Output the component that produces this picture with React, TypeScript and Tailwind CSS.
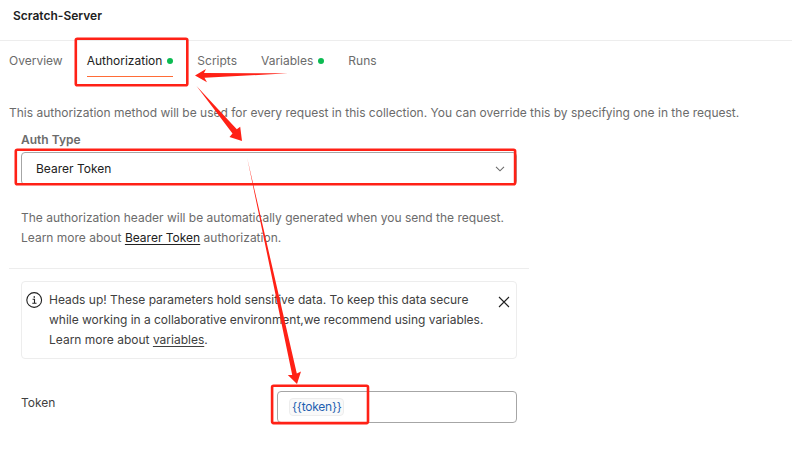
import React from "react";

function Dot() {
  return <span className="size-1.5 rounded-full bg-[#0cbb52]" />;
}

const tab = "flex h-[36px] items-center gap-[5px] border-b border-transparent pt-1";

function Annotations() {
  return (
    <svg className="pointer-events-none absolute left-0 top-0" width="792" height="467" viewBox="0 0 792 467">
      <g fill="none" stroke="#ff2116" strokeWidth="2.6">
        <rect x="75.8" y="38.8" width="111.5" height="46.4" rx="1.5" />
        <rect x="15.8" y="149.8" width="499.3" height="34.4" rx="1.5" />
        <rect x="272.1" y="385.8" width="95.9" height="37.3" rx="1.5" />
      </g>
      <g fill="#ff2116">
        <path d="M288 73.3 L204 73 L206 69 L195 75.6 L207 82.2 L204.5 77.8 Z" />
        <path d="M196.5 86 L236.8 129.3 L240.2 126.8 L242 141 L229.5 137 L232.5 133.5 Z" />
        <path d="M247.2 158 L296.8 373.5 L301 371.5 L297 384 L287.8 375 L292.2 375 Z" />
      </g>
    </svg>
  );
}

export default function App() {
  return (
    <div className="relative h-[467px] w-[792px] overflow-hidden bg-white font-['Inter',sans-serif] text-[12px] leading-5 text-[#6b6b6b]">
      <header className="h-[41px] border-b border-[#ededed] pl-[13px] pt-[6px] font-semibold text-[#212121]">
        Scratch-Server
      </header>
      <nav className="flex pl-[9px]">
        <div className={tab}>Overview</div>
        <div className="ml-6 flex h-[36px] items-center gap-[5px] border-b border-[#ff6c37] pt-1 text-[#212121]">
          Authorization <Dot />
        </div>
        <div className={tab + " ml-6"}>Scripts</div>
        <div className={tab + " ml-6"}>Variables <Dot /></div>
        <div className={tab + " ml-6"}>Runs</div>
      </nav>
      <main>
        <p className="mt-[26px] whitespace-nowrap pl-[9px]">
          This authorization method will be used for every request in this collection. You can override this by specifying one in the request.
        </p>
        <section className="ml-[9px] h-[146px] w-[520px] border-b border-[#ededed] pl-3 pt-[7px]">
          <div className="font-semibold">Auth Type</div>
          <div className="mt-[2px] flex h-[33px] w-[496px] items-center justify-between rounded border border-[#a6a6a6] pl-[14px] pr-[11px] text-[#212121]">
            <span>Bearer Token</span>
            <svg width="10" height="6" viewBox="0 0 10 6" fill="none" stroke="#6b6b6b" strokeWidth="1.1"><path d="M1 .8 5 4.8 9 .8" /></svg>
          </div>
          <p className="mt-[23px] whitespace-nowrap">
            The authorization header will be automatically generated when you send the request.
            <br />
            Learn more about <a className="text-[#212121] underline underline-offset-2">Bearer Token</a> authorization.
          </p>
        </section>
        <section className="ml-[21px] mt-3 flex h-[78px] w-[496px] rounded border border-[#ededed] pl-1 pt-[8px] text-[#404040]">
          <svg className="mt-[2px] shrink-0" width="17" height="17" viewBox="0 0 17 17" fill="none" stroke="#212121" strokeWidth="1.1">
            <circle cx="8.2" cy="8" r="7.4" />
            <path d="M6.6 7.2h1.9v4M6.3 11.3h4.2" />
            <path d="M7.6 4.9h1.4" strokeWidth="1.5" />
          </svg>
          <p className="ml-[6px] w-[449px] whitespace-nowrap">
            Heads up! These parameters hold sensitive data. To keep this data secure<br />
            <span className="tracking-[-0.02px]">while working in a collaborative environment,we recommend using variables.</span><br />
            Learn more about <a className="underline underline-offset-2">variables</a>.
          </p>
          <svg className="mt-[6px] shrink-0" width="12" height="12" viewBox="0 0 12 12" fill="none" stroke="#212121" strokeWidth="1.1"><path d="m1 1 10 10M11 1 1 11" /></svg>
        </section>
        <section className="ml-[21px] mt-8 flex w-[496px] justify-between">
          <span className="mt-[2px] text-[#404040]">Token</span>
          <div className="flex h-8 w-[240px] items-center rounded border border-[#a6a6a6] pl-[11px]">
            <span className="flex h-[18px] w-[55px] items-center rounded border border-[#ededed] bg-[#f9f9f9] pl-[2px] tracking-[-0.25px] text-[#1f5fb0]">{"{{token}}"}</span>
          </div>
        </section>
      </main>
      <Annotations />
    </div>
  );
}
